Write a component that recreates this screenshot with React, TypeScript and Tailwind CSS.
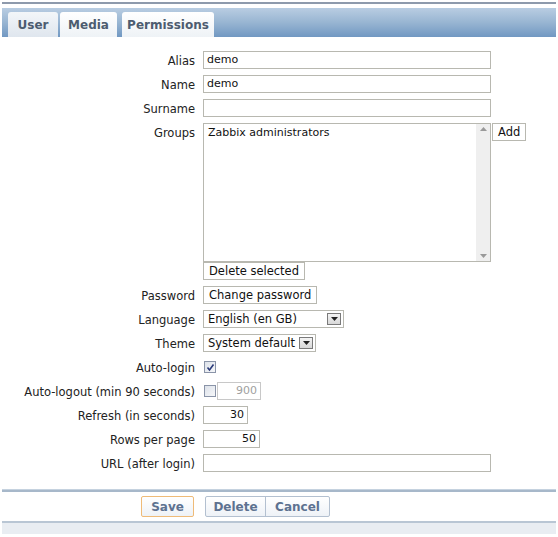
import React from "react";

const font = { fontFamily: '"DejaVu Sans", Verdana, sans-serif' };

function Label({ children }: { children: React.ReactNode }) {
  return <div className="h-[18px] text-right text-[11.5px] text-[#222] leading-[20px] whitespace-nowrap">{children}</div>;
}

function TextInput({ value = "", w, right, muted }: { value?: string; w: string; right?: boolean; muted?: boolean }) {
  return (
    <div
      className={`${w} h-[18px] border border-[#b8b8b0] bg-white px-[3px] text-[11px] leading-[16px] ${right ? "text-right" : ""} ${muted ? "text-[#a0a0a0] border-[#c8c8c8]" : "text-[#111]"}`}
    >
      {value}
    </div>
  );
}

function Btn({ children }: { children: React.ReactNode }) {
  return (
    <div className="h-[18px] border border-[#b8b8b0] bg-white px-[5px] text-[11.5px] leading-[16px] text-[#111] w-fit">
      {children}
    </div>
  );
}

function Select({ value, w }: { value: string; w: string }) {
  return (
    <div className={`${w} h-[18px] border border-[#b8b8b0] bg-white pl-[4px] pr-[2px] flex items-center justify-between text-[11.5px] text-[#111]`}>
      <span className="leading-[16px]">{value}</span>
      <span className="w-[14px] h-[12px] border border-[#7a7a7a] bg-gradient-to-b from-[#f4f4f4] to-[#d8d8d8] flex items-center justify-center">
        <svg width="7" height="4" viewBox="0 0 7 4"><path d="M0 0h7L3.5 4z" fill="#222" /></svg>
      </span>
    </div>
  );
}

function Check({ checked }: { checked?: boolean }) {
  return (
    <div className="w-[12px] h-[12px] border border-[#8a94a8] bg-gradient-to-br from-[#dde2ea] to-[#f6f7f9] flex items-center justify-center mt-[3px] ml-[1px]">
      {checked && (
        <svg width="9" height="9" viewBox="0 0 9 9"><path d="M1.5 4.5l2 2.5L7.5 1.5" stroke="#2a3a7a" strokeWidth="1.6" fill="none" /></svg>
      )}
    </div>
  );
}

export default function App() {
  return (
    <div className="w-[558px] h-[537px] bg-white relative overflow-hidden" style={font}>
      <div className="h-[2px]" />
      <div className="h-[2px] bg-[#8e9aac] mx-[2px]" />
      <div className="h-[4px]" />
      {/* tab bar */}
      <div className="h-[29px] mx-[2px] bg-gradient-to-b from-[#b9cde2] via-[#98b5d2] to-[#7198c2] flex items-end pl-[6px] gap-[2px]">
        <div className="h-[25px] w-[50px] rounded-t-[3px] bg-gradient-to-b from-[#f3f6f9] to-[#dfe6ee] flex items-center justify-center text-[12px] font-bold text-[#4d5c70]">User</div>
        <div className="h-[25px] w-[57px] rounded-t-[3px] bg-gradient-to-b from-[#ffffff] to-[#eef2f6] flex items-center justify-center text-[12px] font-bold text-[#4d5c70]">Media</div>
        <div className="ml-[3px] h-[25px] w-[92px] rounded-t-[3px] bg-gradient-to-b from-[#ffffff] to-[#eef2f6] flex items-center justify-center text-[12px] font-bold text-[#4d5c70]">Permissions</div>
      </div>

      {/* form */}
      <div className="mt-[14px] grid grid-cols-[195px_1fr] gap-x-[8px] gap-y-[6px]">
        <Label>Alias</Label>
        <TextInput value="demo" w="w-[288px]" />
        <Label>Name</Label>
        <TextInput value="demo" w="w-[288px]" />
        <Label>Surname</Label>
        <TextInput w="w-[288px]" />
        <Label>Groups</Label>
        <div>
          <div className="flex items-start">
            <div className="w-[288px] h-[139px] border border-[#b8b8b0] bg-white flex">
              <div className="flex-1 px-[4px] pt-[1px] text-[11px] leading-[16px] text-[#111]">Zabbix administrators</div>
              <div className="w-[14px] bg-[#efefef] flex flex-col justify-between items-center py-[3px]">
                <svg width="7" height="4" viewBox="0 0 7 4"><path d="M0 4h7L3.5 0z" fill="#999" /></svg>
                <svg width="7" height="4" viewBox="0 0 7 4"><path d="M0 0h7L3.5 4z" fill="#999" /></svg>
              </div>
            </div>
            <div className="ml-[1px]"><Btn>Add</Btn></div>
          </div>
          <div className="mt-0">
            <Btn>Delete selected</Btn>
          </div>
        </div>
        <Label>Password</Label>
        <Btn>Change password</Btn>
        <Label>Language</Label>
        <Select value="English (en  GB)" w="w-[141px]" />
        <Label>Theme</Label>
        <Select value="System default" w="w-[113px]" />
        <Label>Auto-login</Label>
        <Check checked />
        <Label>Auto-logout (min 90 seconds)</Label>
        <div className="flex items-start gap-[1px]">
          <Check />
          <TextInput value="900" w="w-[44px]" right muted />
        </div>
        <Label>Refresh (in seconds)</Label>
        <TextInput value="30" w="w-[45px]" right />
        <Label>Rows per page</Label>
        <TextInput value="50" w="w-[57px]" right />
        <Label>URL (after login)</Label>
        <TextInput w="w-[288px]" />
      </div>

      {/* footer */}
      <div className="mt-[17px] mx-[2px] h-[1px] bg-[#c5d2df]" />
      <div className="mx-[2px] h-[2px] bg-[#a7b8ca]" />
      <div className="h-[29px] flex items-center pl-[141px]">
        <div className="h-[21px] w-[53px] border border-[#efbb78] rounded-[2px] bg-gradient-to-b from-white to-[#eef2f7] text-[12px] font-bold text-[#5d7290] flex items-center justify-center">Save</div>
        <div className="ml-[11px] flex h-[21px] border border-[#b3c0d0] rounded-[2px] bg-gradient-to-b from-white to-[#eef2f7] text-[12px] font-bold text-[#5d7290]">
          <div className="w-[60px] flex items-center justify-center border-r border-[#b3c0d0]">Delete</div>
          <div className="w-[63px] flex items-center justify-center">Cancel</div>
        </div>
      </div>
      <div className="mx-[2px] h-[2px] bg-[#b9c6d4]" />
      <div className="mx-[2px] h-[11px] bg-[#e9edf2]" />
    </div>
  );
}
